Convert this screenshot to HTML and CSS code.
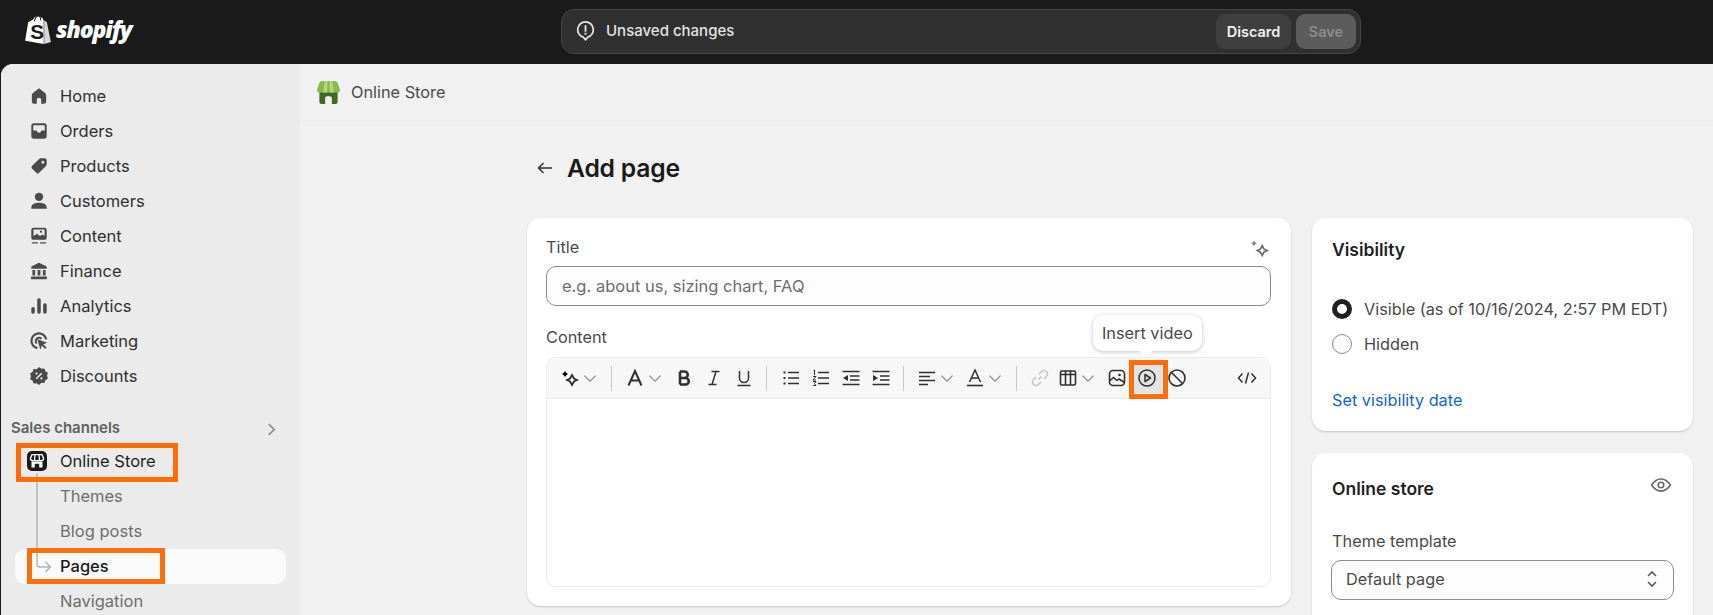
FILE: index.html
```html
<!DOCTYPE html>
<html lang="en">
<head>
	<meta charset="UTF-8">
	<title>Add page</title>
	<link rel="stylesheet" href="styles.css">
</head>
<body>
<div class="topbar">
	<div class="brand">
		<svg class="brand-bag" viewBox="0 0 28 30">
			<path fill="#fff" d="M2 26 L5 8 Q10 6 11 3.500 Q14 .5 17 3 L19 4 L20 6.500 L20 29 Z"/>
			<path fill="#d8d8d8" d="M20.500 6 L23 8 L27 27 L20.500 29 Z"/>
			<path fill="none" stroke="#1a1a1a" stroke-width="1" d="M11 7 Q12 2 15 2 Q17 2 17 6"/>
			<text class="bag-s" x="7" y="24">S</text>
		</svg>
		<span class="brand-name">shopify</span>
	</div>
	<div class="savebar">
		<svg class="save-icon" viewBox="0 0 20 20"><path fill="none" stroke="#e3e3e3" stroke-width="1.500" d="M10 2.500a6.800 6.800 0 0 1 2 13.300L10 18l-2-2.200A6.800 6.800 0 0 1 10 2.500z"/><path stroke="#e3e3e3" stroke-width="1.600" d="M10 5.500v5.500M10 12v1.800"/></svg>
		<span class="save-text">Unsaved changes</span>
		<button class="btn-discard">Discard</button>
		<button class="btn-save">Save</button>
	</div>
</div>

<div class="frame">
	<nav class="sidebar">
		<ul class="nav-list">
			<li class="nav-item"><svg class="nav-icon" viewBox="0 0 20 20"><path d="M10 3L4.500 7.300Q3.500 8.100 3.500 9.500V15a2 2 0 0 0 2 2H8v-3.500a2 2 0 0 1 4 0V17h2.500a2 2 0 0 0 2-2V9.500q0-1.400-1-2.200z"/></svg>Home</li>
			<li class="nav-item"><svg class="nav-icon" viewBox="0 0 20 20"><path fill-rule="evenodd" d="M5.500 3h9A2.500 2.500 0 0 1 17 5.500v9a2.500 2.500 0 0 1-2.500 2.500h-9A2.500 2.500 0 0 1 3 14.500v-9A2.500 2.500 0 0 1 5.500 3zM4.800 5.500v4h3q.5 2.200 2.200 2.200t2.200-2.200h3v-4q0-.8-.8-.8h-8.800q-.8 0-.8.8z"/></svg>Orders</li>
			<li class="nav-item"><svg class="nav-icon" viewBox="0 0 20 20"><path fill-rule="evenodd" d="M11.500 3H15a2 2 0 0 1 2 2v3.500q0 .8-.6 1.400l-6.500 6.500q-1 1-2.100 0l-4.200-4.200q-1-1.100 0-2.100l6.500-6.500Q10.700 3 11.500 3zM13.500 5.300a1.300 1.300 0 1 0 .01 0z"/></svg>Products</li>
			<li class="nav-item"><svg class="nav-icon" viewBox="0 0 20 20"><circle cx="10" cy="6.200" r="3.800"/><path d="M3 17v-1q0-4.500 7-4.500t7 4.500v1z"/></svg>Customers</li>
			<li class="nav-item"><svg class="nav-icon" viewBox="0 0 20 20"><path fill-rule="evenodd" d="M5 2.500h10A2 2 0 0 1 17 4.500v7a2 2 0 0 1-2 2H5a2 2 0 0 1-2-2v-7a2 2 0 0 1 2-2zM5 4.200v6L8 8l3 2 2-1.300 2 1.300V4.200zM11.800 5a1 1 0 1 0 .01 0z"/><path d="M3.500 15.600H9v1.300H3.500zM11 15.600h5.500v1.300H11z"/></svg>Content</li>
			<li class="nav-item"><svg class="nav-icon" viewBox="0 0 20 20"><path d="M10 2.500L17 6v2H3V6zM4 9h2.500v5H4zM8.700 9h2.600v5H8.700zM13.500 9H16v5h-2.500zM2.800 15h14.400v2.500H2.800z"/></svg>Finance</li>
			<li class="nav-item"><svg class="nav-icon" viewBox="0 0 20 20"><rect x="3" y="11" width="3.200" height="6" rx="1.500"/><rect x="8.400" y="3" width="3.200" height="14" rx="1.500"/><rect x="13.800" y="7.500" width="3.200" height="9.500" rx="1.500"/></svg>Analytics</li>
			<li class="nav-item"><svg class="nav-icon" viewBox="0 0 20 20"><path fill="none" stroke="#4a4a4a" stroke-width="2" d="M8.500 16.500A6.800 6.800 0 1 1 16.600 8.500"/><path fill="none" stroke="#4a4a4a" stroke-width="1.800" d="M7.900 12.300A3 3 0 1 1 12.300 8"/><path d="M8.500 8.500l9 3-3.600 1.400 3 3-1.300 1.300-3-3L11.200 18z"/></svg>Marketing</li>
			<li class="nav-item"><svg class="nav-icon" viewBox="0 0 20 20"><path d="M10 1.800l2.200 1.500 2.700-.2.900 2.500 2.300 1.500-.8 2.600.8 2.600-2.300 1.500-.9 2.500-2.700-.2L10 18.200l-2.200-1.500-2.700.2-.9-2.500-2.300-1.500.8-2.600-.8-2.600 2.300-1.500.9-2.500 2.700.2z"/><path stroke="#ebebeb" stroke-width="1.500" d="M12.500 7.500l-5 5"/><circle cx="7.800" cy="7.800" r="1" fill="#ebebeb"/><circle cx="12.200" cy="12.200" r="1" fill="#ebebeb"/></svg>Discounts</li>
		</ul>
		<div class="nav-heading">
			<span>Sales channels</span>
			<svg class="heading-chev" viewBox="0 0 12 12"><path fill="none" stroke="#8a8a8a" stroke-width="1.500" d="M3.500 1L8.500 6l-5 5"/></svg>
		</div>
		<ul class="nav-list nav-tree">
			<li class="nav-item nav-strong"><svg class="store-icon" viewBox="0 0 20 20"><rect width="20" height="20" rx="5" fill="#1a1a1a"/><path fill="none" stroke="#fff" stroke-width="1.300" d="M5 3.700h10l1.600 3.800q0 2-2.100 2.100H5.500q-2.100-.1-2.100-2.100zM8 3.700l-.5 5.900M12 3.700l.5 5.900"/><path fill="#fff" d="M4.500 10.500h11v6h-3.300v-3.800H7.800v3.800H4.500z"/></svg>Online Store</li>
			<li class="nav-item nav-sub">Themes</li>
			<li class="nav-item nav-sub">Blog posts</li>
			<li class="nav-item nav-sub nav-active">Pages</li>
			<li class="nav-item nav-sub">Navigation</li>
			<svg class="tree-line" viewBox="0 0 16 105"><path fill="none" stroke="#b5b5b5" stroke-width="1.500" d="M1 0v91q0 3 3 3h10M9.500 89l5 5-5 5"/></svg>
		</ul>
		<div class="mark mark-store"></div>
		<div class="mark mark-pages"></div>
	</nav>

	<main class="main">
		<header class="app-head">
			<svg class="app-logo" viewBox="0 0 24 24"><path fill="#3f6b22" d="M2.500 9h19v13q0 2-2 2h-4v-6q0-2-2-2h-3q-2 0-2 2v6h-4q-2 0-2-2z"/><path fill="#8db84a" d="M5 0h14q2 0 3 3l2 6q0 3-3 3H3q-3 0-3-3l2-6q1-3 3-3z"/><path fill="#b7d67c" d="M8 0h3l-.5 12H6.500zM13 0h3l1.500 12H13.500z"/></svg>
			<span>Online Store</span>
		</header>

		<div class="page">
			<div class="page-title">
				<svg class="back" viewBox="0 0 20 20"><path fill="none" stroke="#303030" stroke-width="1.500" d="M17 10H3.500M8.500 5l-5 5 5 5"/></svg>
				<h1>Add page</h1>
			</div>
			<div class="columns">
				<section class="card card-main">
					<div class="label-row">
						<label>Title</label>
						<svg class="spark" viewBox="0 0 20 20"><path fill="#8a8a8a" d="M4.500 1.500l1 1.500 1.500 1-1.500 1-1 1.500-1-1.500-1.500-1 1.500-1z"/><path fill="none" stroke="#6a6a6a" stroke-width="1.500" d="M12 6l1.500 3 3 1.500-3 1.500-1.500 3-1.500-3-3-1.500 3-1.500z"/></svg>
					</div>
					<div class="input"><span>e.g. about us, sizing chart, FAQ</span></div>
					<label class="label-content">Content</label>
					<div class="editor">
						<div class="tooltip">Insert video</div>
						<div class="toolbar">
							<span class="tool tool-drop"><svg class="ic" viewBox="0 0 20 20"><path d="M5 3l1.200 1.800L8 6 6.200 7.200 5 9 3.800 7.200 2 6l1.800-1.200z"/><path fill="none" stroke="#303030" stroke-width="1.800" d="M12 7l2 3.500 3 1.500-3 1.500-2 3.500-2-3.500-3-1.500 3-1.500z"/></svg><svg class="chev" viewBox="0 0 20 20"><path d="M3 7l7 7 7-7"/></svg></span>
							<i class="sep"></i>
							<span class="tool tool-drop"><svg class="ic" viewBox="0 0 20 20"><path fill="none" stroke="#303030" stroke-width="2" d="M3.500 17.500L10 3l6.500 14.500M5.800 12.500h8.400"/></svg><svg class="chev" viewBox="0 0 20 20"><path d="M3 7l7 7 7-7"/></svg></span>
							<span class="tool"><svg class="ic" viewBox="0 0 20 20"><path fill="none" stroke="#303030" stroke-width="2.600" d="M6 3.500v13M6 3.500h4.500a3.200 3.200 0 0 1 0 6.500H6M6 10h5.500a3.200 3.200 0 0 1 0 6.500H6"/></svg></span>
							<span class="tool"><svg class="ic" viewBox="0 0 20 20"><path fill="none" stroke="#303030" stroke-width="1.500" d="M7.500 3.500h8M4.500 16.500h8M12 3.500L8 16.500"/></svg></span>
							<span class="tool"><svg class="ic" viewBox="0 0 20 20"><path fill="none" stroke="#303030" stroke-width="1.500" d="M5.500 3v7a4.500 4.500 0 0 0 9 0V3M3.500 17.500h13"/></svg></span>
							<i class="sep"></i>
							<span class="tool"><svg class="ic" viewBox="0 0 20 20"><path fill="none" stroke="#303030" stroke-width="1.500" d="M7 4.500h11M7 10h11M7 15.500h11"/><path stroke="#303030" stroke-width="2" d="M2.500 4.500h2M2.500 10h2M2.500 15.500h2"/></svg></span>
							<span class="tool"><svg class="ic" viewBox="0 0 20 20"><path fill="none" stroke="#303030" stroke-width="1.500" d="M7 4.500h11M7 10h11M7 15.500h11"/><path fill="none" stroke="#303030" d="M2.500 2.500l1-.5v5M2 8.500h3l-3 3.500h3M2 13.500h3l-1.500 2 1.500 2H2"/></svg></span>
							<span class="tool"><svg class="ic" viewBox="0 0 20 20"><path fill="none" stroke="#303030" stroke-width="1.500" d="M1.500 3.500h17M9 8h9.500M9 12h9.500M1.500 16.500h17"/><path d="M7 7v6l-5-3z" fill="#303030"/></svg></span>
							<span class="tool"><svg class="ic" viewBox="0 0 20 20"><path fill="none" stroke="#303030" stroke-width="1.500" d="M1.500 3.500h17M9 8h9.500M9 12h9.500M1.500 16.500h17"/><path d="M2 7v6l5-3z" fill="#303030"/></svg></span>
							<i class="sep"></i>
							<span class="tool tool-drop"><svg class="ic" viewBox="0 0 20 20"><path fill="none" stroke="#303030" stroke-width="1.500" d="M2 4.500h16M2 8.500h11M2 12.500h16M2 16.500h9"/></svg><svg class="chev" viewBox="0 0 20 20"><path d="M3 7l7 7 7-7"/></svg></span>
							<span class="tool tool-drop"><svg class="ic" viewBox="0 0 20 20"><path fill="none" stroke="#303030" stroke-width="1.500" d="M4.500 14L10 2l5.500 12M6.300 10h7.400"/><path stroke="#303030" stroke-width="1.600" d="M2 17.500h16"/></svg><svg class="chev" viewBox="0 0 20 20"><path d="M3 7l7 7 7-7"/></svg></span>
							<i class="sep"></i>
							<span class="tool tool-link"><svg class="ic" viewBox="0 0 20 20"><path fill="none" stroke="#c4c4c4" stroke-width="1.500" d="M8.500 11.500l3-3M9 6l2.500-2.500a3.500 3.500 0 0 1 5 5L14 11M11 14l-2.500 2.500a3.500 3.500 0 0 1-5-5L6 9"/></svg></span>
							<span class="tool tool-drop"><svg class="ic" viewBox="0 0 20 20"><path fill="none" stroke="#303030" stroke-width="1.600" d="M4 3h12a1.500 1.500 0 0 1 1.500 1.500v11A1.500 1.500 0 0 1 16 17H4a1.500 1.500 0 0 1-1.500-1.500v-11A1.500 1.500 0 0 1 4 3zM2.500 6.500h15M7.500 3v14M12.500 3v14"/></svg><svg class="chev" viewBox="0 0 20 20"><path d="M3 7l7 7 7-7"/></svg></span>
							<span class="tool"><svg class="ic" viewBox="0 0 20 20"><rect x="2.500" y="2.500" width="15" height="15" rx="3.500" fill="none" stroke="#303030" stroke-width="1.600"/><path fill="none" stroke="#303030" stroke-width="1.500" d="M2.500 13l4-3.500 3.500 3 2-1.500 5.500 3.500"/><circle cx="12.500" cy="7" r="1.300" fill="#303030"/></svg></span>
							<span class="tool tool-hover"><svg class="ic" viewBox="0 0 20 20"><circle cx="10" cy="10" r="8" fill="none" stroke="#303030" stroke-width="1.500"/><path fill="none" stroke="#303030" stroke-width="1.500" stroke-linejoin="round" d="M8 6.500l5.500 3.500L8 13.500z"/></svg></span>
							<span class="tool"><svg class="ic" viewBox="0 0 20 20"><circle cx="10" cy="10" r="8" fill="none" stroke="#303030" stroke-width="1.600"/><path stroke="#303030" stroke-width="1.600" d="M4.500 4.500l11 11"/></svg></span>
							<span class="tool tool-code"><svg class="ic" viewBox="0 0 20 20"><path fill="none" stroke="#303030" stroke-width="1.500" d="M5.500 5.500L1.500 10l4 4.500M14.500 5.500l4 4.500-4 4.500M11.500 4.500l-3 11"/></svg></span>
							<div class="mark mark-video"></div>
						</div>
						<div class="editor-body"></div>
					</div>
				</section>

				<aside class="side">
					<section class="card card-vis">
						<h2>Visibility</h2>
						<div class="radio-row"><i class="radio radio-on"></i>Visible (as of 10/16/2024, 2:57 PM EDT)</div>
						<div class="radio-row"><i class="radio"></i>Hidden</div>
						<a class="link" href="#">Set visibility date</a>
					</section>
					<section class="card card-store">
						<div class="store-head">
							<h2>Online store</h2>
							<svg class="eye" viewBox="0 0 20 20"><path fill="none" stroke="#6a6a6a" stroke-width="1.500" d="M1.500 10Q5 4.500 10 4.500T18.500 10Q15 15.500 10 15.500T1.500 10z"/><circle cx="10" cy="10" r="2.500" fill="none" stroke="#6a6a6a" stroke-width="1.500"/></svg>
						</div>
						<label class="label-theme">Theme template</label>
						<div class="select">
							<span>Default page</span>
							<svg class="updown" viewBox="0 0 12 20"><path fill="none" stroke="#5a5a5a" stroke-width="1.600" d="M2 7l4-4 4 4M2 13l4 4 4-4"/></svg>
						</div>
					</section>
				</aside>
			</div>
		</div>
	</main>
</div>
</body>
</html>
```

FILE: styles.css
```css
*{
	margin: 0;
	padding: 0;
	box-sizing: border-box;
}
html,body{
	height: 615px;
	overflow: hidden;
}
body{
	background: #1a1a1a;
	font-family: Inter, "Liberation Sans", sans-serif;
	font-size: 16.300px;
	color: #303030;
}
li{
	list-style: none;
}

/* top bar */
.topbar{
	height: 64px;
	display: flex;
	align-items: flex-start;
	background: #1a1a1a;
	position: relative;
}
.brand{
	display: flex;
	align-items: center;
	width: 561px;
	padding: 14px 0 0 23px;
}
.brand-bag{
	width: 29px;
	height: 31px;
	flex-shrink: 0;
}
.bag-s{
	font-family: "Liberation Sans", sans-serif;
	font-weight: bold;
	font-size: 20px;
	fill: #1a1a1a;
}
.brand-name{
	font-family: "Open Sans", "Liberation Sans", sans-serif;
	font-style: italic;
	font-weight: 800;
	font-size: 23px;
	letter-spacing: -1.100px;
	color: #fff;
	margin-left: 4px;
	margin-top: -1px;
}
.savebar{
	width: 800px;
	height: 45px;
	margin-top: 9px;
	padding: 0 4px 0 12px;
	display: flex;
	align-items: center;
	background: #303030;
	border: 1px solid #454545;
	border-radius: 13px;
}
.save-icon{
	width: 23px;
	height: 23px;
	margin-top: -3px;
}
.save-text{
	flex: 1;
	margin: -3px 0 0 9px;
	font-size: 15px;
	font-weight: 500;
	color: #e3e3e3;
}
.savebar button{
	height: 35px;
	border: none;
	border-radius: 9px;
	font-family: inherit;
	font-size: 14.500px;
	font-weight: 600;
}
.btn-discard{
	width: 75px;
	background: #3f3f3f;
	color: #f1f1f1;
}
.btn-save{
	width: 60px;
	margin-left: 5px;
	background: #5c5c5c;
	color: #8c8c8c;
}

/* frame below the top bar */
.frame{
	height: 551px;
	margin-left: 1px;
	display: flex;
	border-radius: 12px 0 0 0;
	overflow: hidden;
	background: #f1f1f1;
}
.sidebar{
	width: 299px;
	flex-shrink: 0;
	padding: 15px 14px 0;
	background: #ebebeb;
	position: relative;
	font-size: 16.500px;
}
.nav-item{
	height: 35px;
	display: flex;
	align-items: center;
	padding: 0 0 2px 13px;
	gap: 10px;
	color: #303030;
}
.nav-icon{
	width: 22px;
	height: 22px;
	fill: #4a4a4a;
	flex-shrink: 0;
}
.nav-heading{
	height: 35px;
	margin-top: 16px;
	padding: 0 8px 0 0;
	display: flex;
	align-items: center;
	justify-content: space-between;
	font-size: 15px;
	font-weight: 600;
	color: #616161;
}
.nav-heading span{
	margin-left: -4px;
}
.heading-chev{
	width: 13px;
	height: 13px;
	margin-top: 3px;
}
.nav-tree{
	position: relative;
	margin-top: -1px;
}
.store-icon{
	width: 20px;
	height: 20px;
	flex-shrink: 0;
}
.nav-strong{
	padding-left: 12px;
	gap: 13px;
	color: #1f1f1f;
}
.nav-sub{
	padding-left: 45px;
	color: #6e6e6e;
}
.nav-active{
	background: #fafafa;
	border-radius: 10px;
	color: #1a1a1a;
	font-weight: 500;
}
.tree-line{
	position: absolute;
	left: 21px;
	top: 29px;
	width: 16px;
	height: 105px;
}

/* orange callouts */
.mark{
	position: absolute;
	border: 5px solid #ff6d0a;
	pointer-events: none;
}
.mark-store{
	left: 15px;
	top: 379px;
	width: 162px;
	height: 39px;
}
.mark-pages{
	left: 26px;
	top: 484px;
	width: 138px;
	height: 36px;
}
.mark-video{
	left: 582px;
	top: 2px;
	width: 39px;
	height: 39px;
}

/* main column */
.main{
	flex: 1;
	min-width: 0;
}
.app-head{
	height: 57px;
	padding-left: 17px;
	display: flex;
	align-items: center;
	gap: 11px;
	border-bottom: 1px solid #ebebeb;
	color: #4a4a4a;
}
.app-logo{
	width: 23px;
	height: 23px;
}
.page{
	padding: 0 20px 0 227px;
}
.page-title{
	height: 97px;
	padding-bottom: 3px;
	display: flex;
	align-items: center;
	gap: 12px;
}
.back{
	width: 20px;
	height: 20px;
	margin-left: 8px;
}
h1{
	font-size: 24.700px;
	font-weight: 600;
	color: #1a1a1a;
	letter-spacing: -0.2px;
}
.columns{
	display: flex;
	gap: 21px;
	align-items: flex-start;
}
.card{
	background: #fff;
	border-radius: 14px;
	box-shadow: 0 1px 2px rgba(0,0,0,.18);
}
.card-main{
	width: 764px;
	height: 388px;
	padding: 19px 20px 0 19px;
}
.label-row{
	height: 20px;
	display: flex;
	align-items: center;
	justify-content: space-between;
}
.spark{
	width: 22px;
	height: 22px;
	margin-top: 6px;
}
label{
	color: #4a4a4a;
}
.input{
	height: 40px;
	margin-top: 9px;
	padding: 0 15px 1px;
	display: flex;
	align-items: center;
	border: 1px solid #8a8a8a;
	border-radius: 10px;
	background: #fdfdfd;
	color: #6e6e6e;
	font-size: 16.500px;
}
.label-content{
	display: block;
	margin: 21px 0 10px;
	line-height: 20px;
}
.editor{
	position: relative;
	height: 230px;
	border: 1px solid #ebebeb;
	border-radius: 10px;
}
.toolbar{
	position: relative;
	height: 41px;
	padding: 0 8px 0 9px;
	display: flex;
	align-items: center;
	background: #f7f7f7;
	border-bottom: 1px solid #ebebeb;
	border-radius: 10px 10px 0 0;
}
.tool{
	width: 30px;
	height: 30px;
	display: flex;
	align-items: center;
	justify-content: center;
	flex-shrink: 0;
}
.tool-drop{
	width: 48px;
	justify-content: flex-start;
	padding-left: 4px;
}
.tool-link{
	width: 28px;
}
.tool-hover{
	background: #e3e3e3;
}
.tool-code{
	margin-left: auto;
}
.ic{
	width: 20px;
	height: 20px;
	flex-shrink: 0;
}
.chev{
	width: 16px;
	height: 16px;
	margin-left: 2px;
	fill: none;
	stroke: #8a8a8a;
	stroke-width: 1.500;
}
.sep{
	width: 1px;
	height: 25px;
	margin: 0 9px 0 7px;
	background: #c9c9c9;
}
.tooltip{
	position: absolute;
	left: 546px;
	top: -43px;
	height: 36px;
	padding: 0 9px;
	display: flex;
	align-items: center;
	background: #fff;
	border-radius: 10px;
	box-shadow: 0 1px 4px rgba(0,0,0,.25);
	color: #4a4a4a;
}
.tooltip:after{
	content: "";
	position: absolute;
	left: 48px;
	bottom: -5px;
	width: 10px;
	height: 10px;
	background: #fff;
	transform: rotate(45deg);
}

/* right column */
.side{
	width: 381px;
	display: flex;
	flex-direction: column;
	gap: 22px;
}
.card h2{
	font-size: 17.500px;
	font-weight: 600;
	color: #1f1f1f;
	line-height: 18px;
}
.card-vis{
	height: 213px;
	padding: 23px 20px 0;
}
.card-vis h2{
	margin-bottom: 32px;
}
.radio-row{
	height: 35px;
	display: flex;
	align-items: center;
	gap: 12px;
	color: #4a4a4a;
}
.radio{
	width: 20px;
	height: 20px;
	flex-shrink: 0;
	border: 1px solid #8a8a8a;
	border-radius: 50%;
	background: #fdfdfd;
}
.radio-on{
	border: 5.500px solid #1f1f1f;
	background: #fff;
}
.link{
	display: block;
	margin-top: 29px;
	color: #1464c8;
	text-decoration: none;
}
.card-store{
	height: 200px;
	padding: 27px 20px 0;
}
.store-head{
	display: flex;
	justify-content: space-between;
	padding-right: 1px;
}
.eye{
	width: 22px;
	height: 22px;
	margin-top: -6px;
}
.label-theme{
	display: block;
	margin-top: 33px;
}
.select{
	height: 40px;
	margin: 9px -1px 0;
	padding: 0 15px 2px 14px;
	display: flex;
	align-items: center;
	justify-content: space-between;
	border: 1px solid #8a8a8a;
	border-radius: 10px;
	background: #fdfdfd;
	color: #4a4a4a;
}
.updown{
	width: 12px;
	height: 20px;
}
```
